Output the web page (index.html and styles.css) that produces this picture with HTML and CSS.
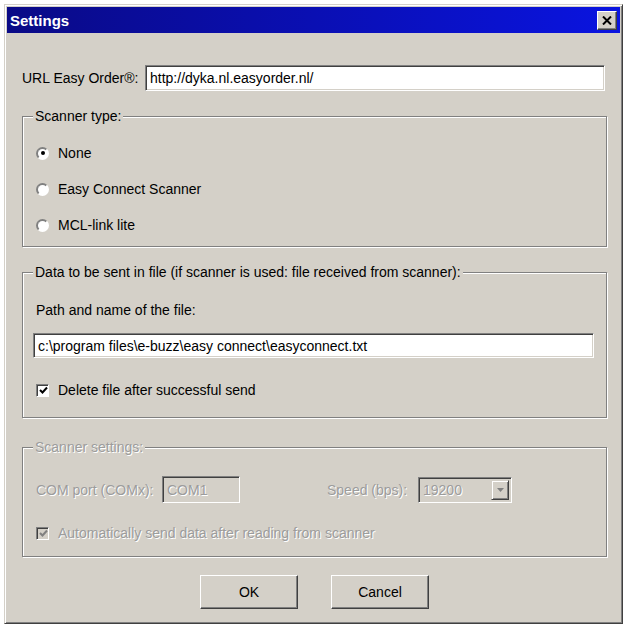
FILE: index.html
```html
<!DOCTYPE html>
<html lang="en">
<head>
  <meta charset="UTF-8">
  <title>Settings</title>
  <link rel="stylesheet" href="styles.css">
</head>
<body>
  <div class="window">
    <div class="titlebar">
      <span class="title">Settings</span>
      <span class="close-btn">
        <svg width="10" height="9" viewBox="0 0 10 9"><path d="M1 0.5 L9 8.5 M9 0.5 L1 8.5" stroke="#000" stroke-width="2"/></svg>
      </span>
    </div>

    <div class="content">
      <div class="url-row">
        <label class="url-label">URL Easy Order®:</label>
        <div class="textbox url-box">http://dyka.nl.easyorder.nl/</div>
      </div>

      <fieldset class="group scanner-type">
        <legend>Scanner type:</legend>
        <div class="option"><span class="radio checked"></span>None</div>
        <div class="option"><span class="radio"></span>Easy Connect Scanner</div>
        <div class="option"><span class="radio"></span>MCL-link lite</div>
      </fieldset>

      <fieldset class="group data-file">
        <legend>Data to be sent in file (if scanner is used: file received from scanner):</legend>
        <div class="field-label">Path and name of the file:</div>
        <div class="textbox path-box">c:\program files\e-buzz\easy connect\easyconnect.txt</div>
        <div class="check-row">
          <span class="checkbox">
            <svg width="9" height="9" viewBox="0 0 9 9"><path d="M1 4 L3.5 6.5 L8 1.5" fill="none" stroke="#000" stroke-width="2"/></svg>
          </span>
          Delete file after successful send
        </div>
      </fieldset>

      <fieldset class="group scanner-settings disabled">
        <legend>Scanner settings:</legend>
        <div class="port-row">
          <span class="port-label">COM port (COMx):</span>
          <div class="textbox com-box">COM1</div>
          <span class="speed-label">Speed (bps):</span>
          <div class="select">
            <span class="select-value">19200</span>
            <span class="select-arrow">
              <svg width="7" height="4" viewBox="0 0 7 4"><path d="M0 0 H7 L3.5 4 Z" fill="#808080"/></svg>
            </span>
          </div>
        </div>
        <div class="check-row auto-row">
          <span class="checkbox">
            <svg width="9" height="9" viewBox="0 0 9 9"><path d="M1 4 L3.5 6.5 L8 1.5" fill="none" stroke="#808080" stroke-width="2"/></svg>
          </span>
          Automatically send data after reading from scanner
        </div>
      </fieldset>

      <div class="buttons">
        <button class="btn">OK</button>
        <button class="btn">Cancel</button>
      </div>
    </div>
  </div>
</body>
</html>
```

FILE: styles.css
```css
:root {
  --face: #d4d0c8;
  --shadow: #808080;
  --dark: #404040;
  --light: #fff;
  --disabled: #9c9c9c;
}
body {
  margin: 0;
  background: #fff;
  font-family: 'Liberation Sans', Arial, sans-serif;
  font-size: 14px;
  color: #000;
}
.window {
  box-sizing: border-box;
  width: 619px;
  height: 620px;
  margin: 4px 0 0 4px;
  padding: 2px;
  background: var(--face);
  border: 1px solid;
  border-color: var(--face) var(--dark) var(--dark) var(--face);
  box-shadow: inset 1px 1px var(--light), inset -1px -1px var(--shadow);
  display: flex;
  flex-direction: column;
}
.titlebar {
  height: 26px;
  display: flex;
  align-items: center;
  justify-content: space-between;
  padding: 0 3px;
  background: linear-gradient(to right, #0a0a86, #0a14e0);
  color: #fff;
  font-weight: bold;
  font-size: 15px;
}
.close-btn {
  box-sizing: border-box;
  width: 20px;
  height: 19px;
  background: var(--face);
  border: 1px solid;
  border-color: var(--light) var(--dark) var(--dark) var(--light);
  box-shadow: inset -1px -1px var(--shadow);
  display: flex;
  align-items: center;
  justify-content: center;
}
.content {
  padding: 32px 13px 0 15px;
  display: flex;
  flex-direction: column;
}
.url-row {
  display: flex;
  align-items: center;
  height: 26px;
}
.url-label {
  width: 123px;
}
.textbox {
  box-sizing: border-box;
  height: 26px;
  padding: 0 4px;
  border: 1px solid;
  border-color: var(--shadow) var(--light) var(--light) var(--shadow);
  box-shadow: inset 1px 1px var(--dark), inset -1px -1px var(--face);
  background: #fff;
  display: flex;
  align-items: center;
  white-space: nowrap;
}
.url-box {
  flex: 1;
  margin-right: 2px;
}

/* group boxes */
.group {
  margin: 17px 0 0;
  padding: 11px 12px 3px 13px;
  min-width: 0;
  border: 1px solid var(--shadow);
  box-shadow: inset 1px 1px var(--light), 1px 1px var(--light);
}
.group legend {
  margin-left: -3px;
  padding: 0 2px;
  line-height: 16px;
  background: var(--face);
}
.option {
  display: flex;
  align-items: center;
  height: 36px;
}
.radio {
  box-sizing: border-box;
  width: 13px;
  height: 13px;
  margin-right: 9px;
  border-radius: 50%;
  border: 2px solid;
  border-color: var(--shadow) var(--light) var(--light) var(--shadow);
  background: #fff;
  display: flex;
  align-items: center;
  justify-content: center;
}
.radio.checked::after {
  content: '';
  width: 4px;
  height: 4px;
  border-radius: 50%;
  background: #000;
}

.data-file {
  padding: 20px 12px 17px 13px;
}
.field-label {
  line-height: 20px;
}
.path-box {
  height: 25px;
  margin: 13px 0 0 -3px;
}
.check-row {
  display: flex;
  align-items: center;
  height: 20px;
  margin-top: 22px;
}
.checkbox {
  box-sizing: border-box;
  width: 13px;
  height: 13px;
  margin-right: 9px;
  border: 1px solid;
  border-color: var(--shadow) var(--light) var(--light) var(--shadow);
  box-shadow: inset 1px 1px var(--dark);
  background: #fff;
  display: flex;
  align-items: center;
  justify-content: center;
  padding: 1px 0 0 1px;
}

/* disabled group */
.scanner-settings {
  margin-top: 21px;
  padding: 21px 12px 13px 13px;
}
.disabled {
  color: var(--disabled);
  text-shadow: 1px 1px var(--light);
}
.disabled legend {
  color: var(--disabled);
}
.port-row {
  display: flex;
  align-items: center;
  height: 27px;
}
.port-label {
  width: 126px;
}
.com-box {
  width: 78px;
  height: 27px;
  background: var(--face);
}
.speed-label {
  width: 91px;
  margin-left: 87px;
}
.select {
  box-sizing: border-box;
  width: 94px;
  height: 26px;
  padding: 2px;
  border: 1px solid;
  border-color: var(--shadow) var(--light) var(--light) var(--shadow);
  box-shadow: inset 1px 1px var(--dark), inset -1px -1px var(--face);
  display: flex;
  align-items: center;
}
.select-value {
  flex: 1;
  padding-left: 2px;
}
.select-arrow {
  box-sizing: border-box;
  width: 18px;
  height: 20px;
  border: 1px solid;
  border-color: var(--face) var(--dark) var(--dark) var(--face);
  box-shadow: inset 1px 1px var(--light), inset -1px -1px var(--shadow);
  display: flex;
  align-items: center;
  justify-content: center;
}
.auto-row {
  margin-top: 20px;
}
.disabled .checkbox {
  background: var(--face);
}

/* buttons */
.buttons {
  display: flex;
  justify-content: center;
  gap: 33px;
  margin-top: 18px;
}
.btn {
  box-sizing: border-box;
  width: 98px;
  height: 34px;
  font: inherit;
  color: #000;
  background: var(--face);
  border: 1px solid;
  border-color: var(--light) var(--dark) var(--dark) var(--light);
  box-shadow: inset -1px -1px var(--shadow);
  cursor: pointer;
}
```
